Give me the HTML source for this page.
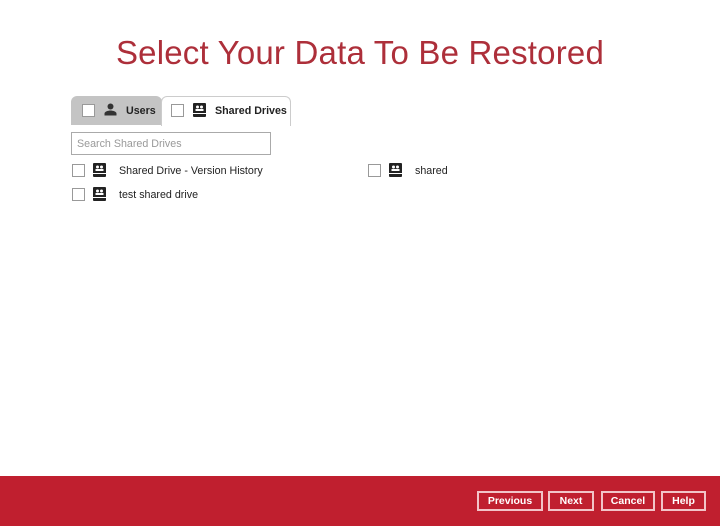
<!DOCTYPE html>
<html><head><style>
*{margin:0;padding:0;box-sizing:border-box}
body{width:720px;height:526px;background:#fff;font-family:"Liberation Sans",sans-serif;position:relative;overflow:hidden;color:#222}
.abs{position:absolute}
h1{position:absolute;top:34px;left:0;width:720px;text-align:center;font-weight:normal;font-size:33px;color:#ad2f3a;letter-spacing:0.2px}
.cb{position:absolute;width:13px;height:13px;border:1px solid #999;background:#fff}
.t{position:absolute;font-size:10.7px;white-space:nowrap}
.btn{position:absolute;top:491px;height:20px;border:2px solid #f2c4c8;color:#fff;font-size:10.5px;font-weight:bold;text-align:center;line-height:16px}
</style></head><body>
<h1>Select Your Data To Be Restored</h1>
<div class="abs" style="left:71px;top:96px;width:91px;height:29px;background:#c4c4c4;border-radius:6px 6px 0 0"></div>
<div class="abs" style="left:161px;top:96px;width:130px;height:30px;background:#fff;border:1px solid #ccc;border-bottom:none;border-radius:6px 6px 0 0"></div>
<div class="cb" style="left:82px;top:104px"></div>
<svg class="abs" style="left:104px;top:103px" width="13" height="13" viewBox="0 0 13 13"><circle cx="6.5" cy="3.5" r="3" fill="#333"/><path d="M0.5 12.5v-2c0-2 4-3 6-3s6 1 6 3v2z" fill="#333"/></svg>
<div class="t" style="left:126px;top:105px;font-weight:bold">Users</div>
<div class="cb" style="left:171px;top:104px"></div>
<svg class="abs" style="left:193px;top:103px" width="13" height="14" viewBox="0 0 13 14"><rect x="0" y="0" width="13" height="14" rx="1" fill="#222"/><circle cx="4.5" cy="4" r="1.5" fill="#fff"/><circle cx="8.5" cy="4" r="1.5" fill="#fff"/><rect x="2.5" y="6" width="8" height="2" fill="#fff"/><rect x="0" y="10" width="13" height="1" fill="#fff"/></svg>
<div class="t" style="left:215px;top:105px;font-weight:bold">Shared Drives</div>
<div class="abs" style="left:71px;top:132px;width:200px;height:23px;border:1px solid #aaa"></div>
<div class="t" style="left:77px;top:138px;color:#999">Search Shared Drives</div>
<div class="cb" style="left:72px;top:164px"></div>
<svg class="abs" style="left:93px;top:163px" width="13" height="14" viewBox="0 0 13 14"><rect width="13" height="14" rx="1" fill="#222"/><circle cx="4.5" cy="4" r="1.5" fill="#fff"/><circle cx="8.5" cy="4" r="1.5" fill="#fff"/><rect x="2.5" y="6" width="8" height="2" fill="#fff"/><rect y="10" width="13" height="1" fill="#fff"/></svg>
<div class="t" style="left:119px;top:165px">Shared Drive - Version History</div>
<div class="cb" style="left:368px;top:164px"></div>
<svg class="abs" style="left:389px;top:163px" width="13" height="14" viewBox="0 0 13 14"><rect width="13" height="14" rx="1" fill="#222"/><circle cx="4.5" cy="4" r="1.5" fill="#fff"/><circle cx="8.5" cy="4" r="1.5" fill="#fff"/><rect x="2.5" y="6" width="8" height="2" fill="#fff"/><rect y="10" width="13" height="1" fill="#fff"/></svg>
<div class="t" style="left:415px;top:165px">shared</div>
<div class="cb" style="left:72px;top:188px"></div>
<svg class="abs" style="left:93px;top:187px" width="13" height="14" viewBox="0 0 13 14"><rect width="13" height="14" rx="1" fill="#222"/><circle cx="4.5" cy="4" r="1.5" fill="#fff"/><circle cx="8.5" cy="4" r="1.5" fill="#fff"/><rect x="2.5" y="6" width="8" height="2" fill="#fff"/><rect y="10" width="13" height="1" fill="#fff"/></svg>
<div class="t" style="left:119px;top:189px">test shared drive</div>
<div class="abs" style="left:0;top:476px;width:720px;height:50px;background:#c01f2f"></div>
<div class="btn" style="left:477px;width:66px">Previous</div>
<div class="btn" style="left:548px;width:46px">Next</div>
<div class="btn" style="left:601px;width:54px">Cancel</div>
<div class="btn" style="left:661px;width:45px">Help</div>
</body></html>
